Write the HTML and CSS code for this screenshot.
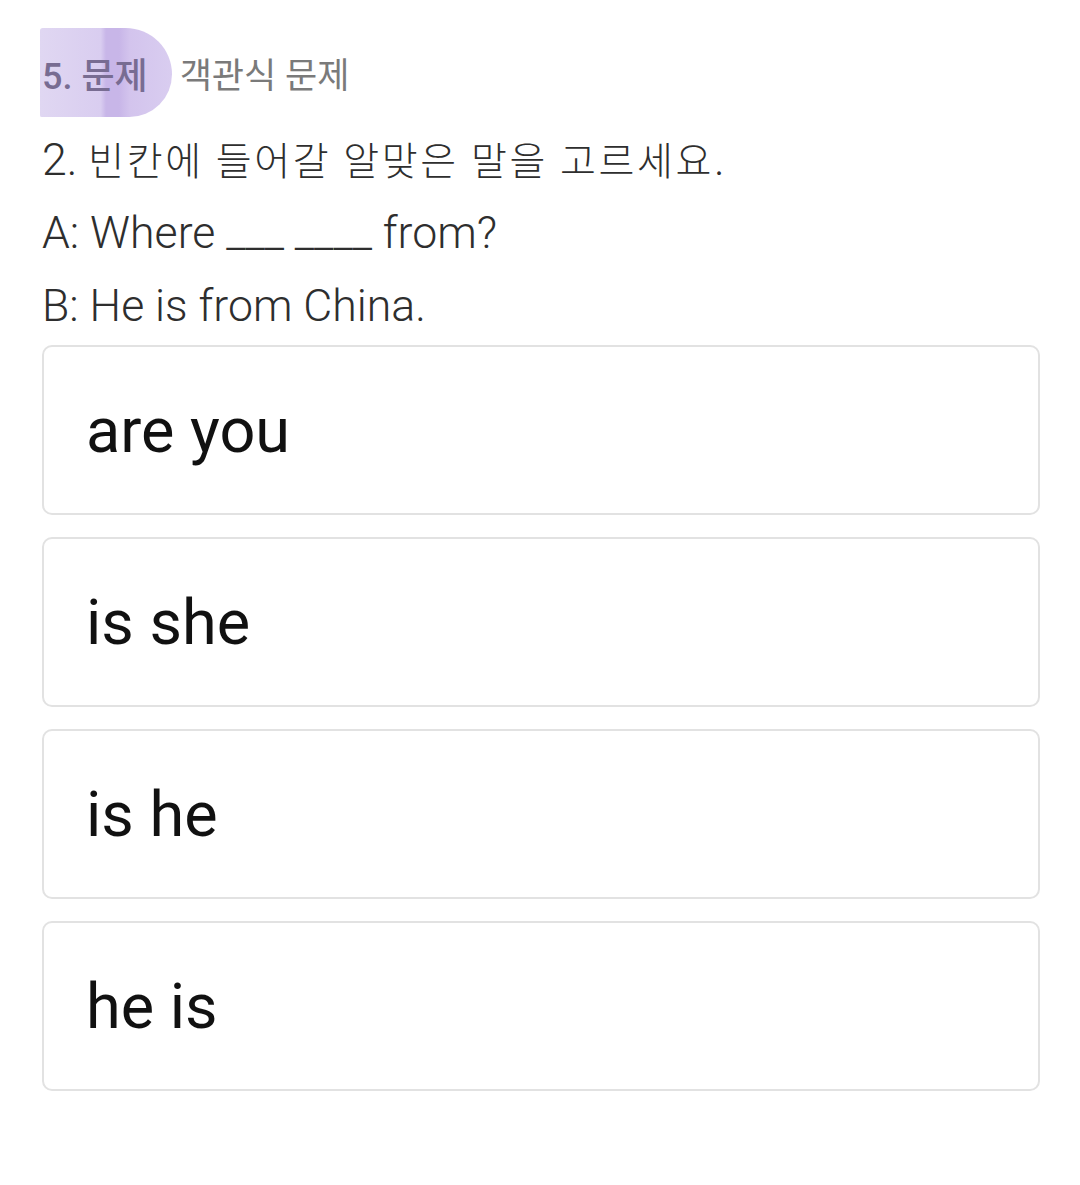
FILE: index.html
```html
<!DOCTYPE html>
<html lang="ko">
<head>
<meta charset="utf-8">
<title>문제</title>
<link rel="stylesheet" href="styles.css">
</head>
<body>
<main class="page">
  <header class="header">
    <span class="tag">5. 문제</span>
    <span class="kind">객관식 문제</span>
  </header>
  <section class="question">
    <p class="line">2. <span class="ko">빈칸에 들어갈 알맞은 말을 고르세요</span>.</p>
    <p class="line">A: Where ___ ____ from?</p>
    <p class="line">B: He is from China.</p>
  </section>
  <ul class="options">
    <li class="option">are you</li>
    <li class="option">is she</li>
    <li class="option">is he</li>
    <li class="option">he is</li>
  </ul>
</main>
</body>
</html>
```

FILE: styles.css
```css
html, body {
  margin: 0;
  padding: 0;
  background: #ffffff;
}

.page {
  padding: 28px 40px 0 42px;
  font-family: Roboto, "Noto Sans CJK KR", sans-serif;
}

.header {
  display: flex;
  align-items: center;
  height: 89px;
}

.tag {
  display: inline-flex;
  align-items: center;
  height: 89px;
  margin-left: -2px;
  padding: 0 24px 0 2px;
  font-size: 36px;
  font-weight: 500;
  color: #786c92;
  background: linear-gradient(90deg, #e0d7f2 0%, #d9cdf0 46%, #c8b6e8 50%, #c8b6e8 60%, #d3c4ed 68%, #d9cdf0 100%);
  border-radius: 3px 50px 46px 2px;
}

.kind {
  margin-left: 8px;
  font-size: 35px;
  font-weight: 400;
  color: #7a7a7a;
}

.question {
  margin-top: 7px;
}

.line {
  margin: 0;
  font-size: 44.6px;
  line-height: 73px;
  font-weight: 300;
  color: #2e2e2e;
  white-space: nowrap;
}

.ko {
  font-size: 39px;
  letter-spacing: 2.6px;
  line-height: 1;
}

.options {
  list-style: none;
  margin: 2px 0 0 0;
  padding: 0;
  display: flex;
  flex-direction: column;
  gap: 22px;
}

.option {
  box-sizing: border-box;
  height: 170px;
  display: flex;
  align-items: center;
  padding-left: 42px;
  border: 2px solid #e2e2e2;
  border-radius: 10px;
  font-size: 63px;
  color: #111111;
}
```
